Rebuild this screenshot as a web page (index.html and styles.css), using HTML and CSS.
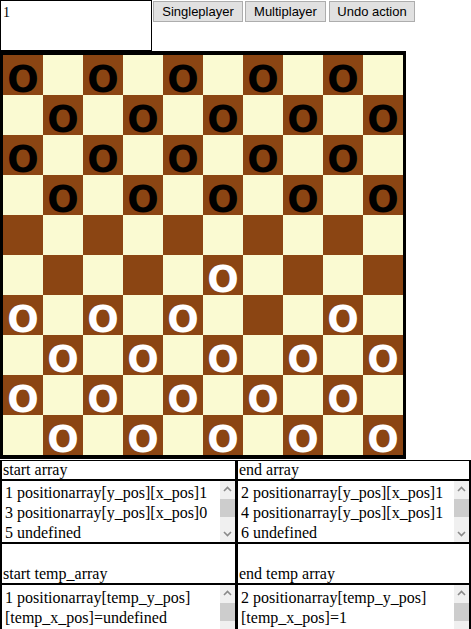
FILE: index.html
```html
<!DOCTYPE html>
<html>
<head>
<meta charset="utf-8">
<link rel="stylesheet" href="styles.css">
</head>
<body>
<div class="top">
  <div class="turn">1</div>
  <div class="btns">
    <button class="btn b1">Singleplayer</button>
    <button class="btn b2">Multiplayer</button>
    <button class="btn b3">Undo action</button>
  </div>
</div>
<div class="board">
  <div class="c d"><span class="p b">O</span></div><div class="c l"></div><div class="c d"><span class="p b">O</span></div><div class="c l"></div><div class="c d"><span class="p b">O</span></div><div class="c l"></div><div class="c d"><span class="p b">O</span></div><div class="c l"></div><div class="c d"><span class="p b">O</span></div><div class="c l"></div>
  <div class="c l"></div><div class="c d"><span class="p b">O</span></div><div class="c l"></div><div class="c d"><span class="p b">O</span></div><div class="c l"></div><div class="c d"><span class="p b">O</span></div><div class="c l"></div><div class="c d"><span class="p b">O</span></div><div class="c l"></div><div class="c d"><span class="p b">O</span></div>
  <div class="c d"><span class="p b">O</span></div><div class="c l"></div><div class="c d"><span class="p b">O</span></div><div class="c l"></div><div class="c d"><span class="p b">O</span></div><div class="c l"></div><div class="c d"><span class="p b">O</span></div><div class="c l"></div><div class="c d"><span class="p b">O</span></div><div class="c l"></div>
  <div class="c l"></div><div class="c d"><span class="p b">O</span></div><div class="c l"></div><div class="c d"><span class="p b">O</span></div><div class="c l"></div><div class="c d"><span class="p b">O</span></div><div class="c l"></div><div class="c d"><span class="p b">O</span></div><div class="c l"></div><div class="c d"><span class="p b">O</span></div>
  <div class="c d"></div><div class="c l"></div><div class="c d"></div><div class="c l"></div><div class="c d"></div><div class="c l"></div><div class="c d"></div><div class="c l"></div><div class="c d"></div><div class="c l"></div>
  <div class="c l"></div><div class="c d"></div><div class="c l"></div><div class="c d"></div><div class="c l"></div><div class="c d"><span class="p w">O</span></div><div class="c l"></div><div class="c d"></div><div class="c l"></div><div class="c d"></div>
  <div class="c d"><span class="p w">O</span></div><div class="c l"></div><div class="c d"><span class="p w">O</span></div><div class="c l"></div><div class="c d"><span class="p w">O</span></div><div class="c l"></div><div class="c d"></div><div class="c l"></div><div class="c d"><span class="p w">O</span></div><div class="c l"></div>
  <div class="c l"></div><div class="c d"><span class="p w">O</span></div><div class="c l"></div><div class="c d"><span class="p w">O</span></div><div class="c l"></div><div class="c d"><span class="p w">O</span></div><div class="c l"></div><div class="c d"><span class="p w">O</span></div><div class="c l"></div><div class="c d"><span class="p w">O</span></div>
  <div class="c d"><span class="p w">O</span></div><div class="c l"></div><div class="c d"><span class="p w">O</span></div><div class="c l"></div><div class="c d"><span class="p w">O</span></div><div class="c l"></div><div class="c d"><span class="p w">O</span></div><div class="c l"></div><div class="c d"><span class="p w">O</span></div><div class="c l"></div>
  <div class="c l"></div><div class="c d"><span class="p w">O</span></div><div class="c l"></div><div class="c d"><span class="p w">O</span></div><div class="c l"></div><div class="c d"><span class="p w">O</span></div><div class="c l"></div><div class="c d"><span class="p w">O</span></div><div class="c l"></div><div class="c d"><span class="p w">O</span></div>
</div>
<div class="panels">
  <div class="col left">
    <div class="label">start array</div>
    <div class="box">
      <div class="text">
        <div>1 positionarray[y_pos][x_pos]1</div>
        <div>3 positionarray[y_pos][x_pos]0</div>
        <div>5 undefined</div>
      </div>
      <div class="sb">
        <div class="arrow"><svg width="15" height="17" viewBox="0 0 15 17"><polyline points="4,10 7.5,6.5 11,10" fill="none" stroke="#8a8a8a" stroke-width="1.6"/></svg></div>
        <div class="thumb t1"></div>
        <div class="track"></div>
        <div class="arrow"><svg width="15" height="17" viewBox="0 0 15 17"><polyline points="4,7 7.5,10.5 11,7" fill="none" stroke="#8a8a8a" stroke-width="1.6"/></svg></div>
      </div>
    </div>
    <div class="label tall">start temp_array</div>
    <div class="box box2">
      <div class="text">
        <div>1 positionarray[temp_y_pos]</div>
        <div>[temp_x_pos]=undefined</div>
      </div>
      <div class="sb">
        <div class="arrow"><svg width="15" height="17" viewBox="0 0 15 17"><polyline points="4,10 7.5,6.5 11,10" fill="none" stroke="#8a8a8a" stroke-width="1.6"/></svg></div>
        <div class="thumb t2"></div>
        <div class="track"></div>
      </div>
    </div>
  </div>
  <div class="col right">
    <div class="label">end array</div>
    <div class="box">
      <div class="text">
        <div>2 positionarray[y_pos][x_pos]1</div>
        <div>4 positionarray[y_pos][x_pos]1</div>
        <div>6 undefined</div>
      </div>
      <div class="sb">
        <div class="arrow"><svg width="15" height="17" viewBox="0 0 15 17"><polyline points="4,10 7.5,6.5 11,10" fill="none" stroke="#8a8a8a" stroke-width="1.6"/></svg></div>
        <div class="thumb t1"></div>
        <div class="track"></div>
        <div class="arrow"><svg width="15" height="17" viewBox="0 0 15 17"><polyline points="4,7 7.5,10.5 11,7" fill="none" stroke="#8a8a8a" stroke-width="1.6"/></svg></div>
      </div>
    </div>
    <div class="label tall">end temp array</div>
    <div class="box box2">
      <div class="text">
        <div>2 positionarray[temp_y_pos]</div>
        <div>[temp_x_pos]=1</div>
      </div>
      <div class="sb">
        <div class="arrow"><svg width="15" height="17" viewBox="0 0 15 17"><polyline points="4,10 7.5,6.5 11,10" fill="none" stroke="#8a8a8a" stroke-width="1.6"/></svg></div>
        <div class="thumb t2"></div>
        <div class="track"></div>
      </div>
    </div>
  </div>
</div>
</body>
</html>
```
FILE: styles.css
```css
html, body {
  margin: 0;
  padding: 0;
  background: #fff;
}
body {
  width: 471px;
  height: 629px;
  overflow: hidden;
  font-family: "Liberation Serif", serif;
}
.top {
  display: flex;
  align-items: flex-start;
  height: 51px;
}
.turn {
  box-sizing: border-box;
  width: 152px;
  height: 51px;
  border: 1px solid #000;
  font-family: "Liberation Serif", serif;
  font-size: 14px;
  line-height: 15px;
  padding: 4px 2px 0;
}
.btns {
  display: flex;
  margin-top: 1px;
  margin-left: 1px;
}
.btn {
  box-sizing: border-box;
  height: 21px;
  margin: 0 2px 0 0;
  padding: 0;
  background: #e1e1e1;
  border: 1px solid #adadad;
  border-radius: 0;
  font-family: "Liberation Sans", Arial, sans-serif;
  font-size: 13px;
  color: #000;
}
.b1 { width: 90px; }
.b2 { width: 81px; margin-right: 3px; }
.b3 { width: 86px; }
.board {
  display: grid;
  grid-template-columns: repeat(10, 40px);
  grid-auto-rows: 40px;
  width: max-content;
  border: solid #000;
  border-width: 4px 3px;
}
.c {
  display: flex;
  justify-content: center;
  align-items: flex-start;
}
.d { background: #8b4513; }
.l { background: #fafad2; }
.p {
  font-family: "DejaVu Sans", sans-serif;
  font-weight: bold;
  font-size: 37px;
  line-height: 28px;
  height: 28px;
  margin-top: 11px;
}
.p.b { color: #000; }
.p.w { color: #fff; }
.panels {
  box-sizing: border-box;
  width: 471px;
  margin-top: 1px;
  display: flex;
  border-top: 1px solid #000;
  border-left: 2px solid #000;
  border-right: 2px solid #000;
  font-size: 16px;
}
.col.left { width: 233px; }
.col.right { width: 231px; border-left: 3px solid #000; }
.label {
  height: 18px;
  line-height: 18px;
  padding-left: 1px;
  border-bottom: 2px solid #000;
  white-space: nowrap;
}
.label.tall {
  height: 39px;
  display: flex;
  align-items: flex-end;
}
.box {
  display: flex;
  height: 61px;
  border-bottom: 2px solid #000;
}
.box2 {
  height: 60px;
  border-bottom: 0;
}
.text {
  flex: 1;
  padding: 2px 0 0 3px;
  line-height: 20px;
  white-space: nowrap;
  overflow: hidden;
}
.box2 .text { padding-top: 3px; }
.sb {
  width: 15px;
  background: #f0f0f0;
  display: flex;
  flex-direction: column;
}
.arrow { height: 17px; }
.arrow svg { display: block; }
.thumb {
  background: #cdcdcd;
  margin-top: 1px;
  height: 18px;
}
.track { flex: 1; }
```
